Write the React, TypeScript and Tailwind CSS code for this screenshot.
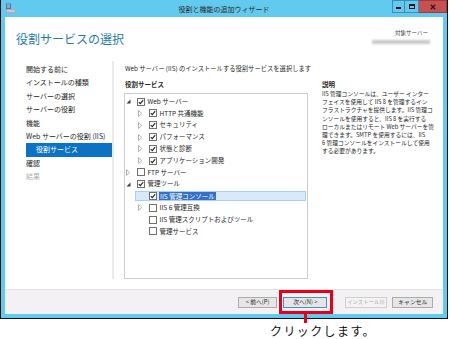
import React from "react";

type Row = {
  level: number;
  exp: "open" | "closed" | "none";
  checked: boolean;
  label: string;
  selected?: boolean;
};

const rows: Row[] = [
  { level: 0, exp: "open", checked: true, label: "Web サーバー" },
  { level: 1, exp: "closed", checked: true, label: "HTTP 共通機能" },
  { level: 1, exp: "closed", checked: true, label: "セキュリティ" },
  { level: 1, exp: "closed", checked: true, label: "パフォーマンス" },
  { level: 1, exp: "closed", checked: true, label: "状態と診断" },
  { level: 1, exp: "closed", checked: true, label: "アプリケーション開発" },
  { level: 0, exp: "closed", checked: false, label: "FTP サーバー" },
  { level: 0, exp: "open", checked: true, label: "管理ツール" },
  { level: 1, exp: "none", checked: true, label: "IIS 管理コンソール", selected: true },
  { level: 1, exp: "closed", checked: false, label: "IIS 6 管理互換" },
  { level: 1, exp: "none", checked: false, label: "IIS 管理スクリプトおよびツール" },
  { level: 1, exp: "none", checked: false, label: "管理サービス" },
];

const navItems = [
  "開始する前に",
  "インストールの種類",
  "サーバーの選択",
  "サーバーの役割",
  "機能",
  "Web サーバーの役割 (IIS)",
];

const descLines = [
  "IIS 管理コンソールは、ユーザー インター",
  "フェイスを使用して IIS 8 を管理するイン",
  "フラストラクチャを提供します。IIS 管理コ",
  "ンソールを使用すると、IIS 8 を実行する",
  "ローカルまたはリモート Web サーバーを管",
  "理できます。SMTP を使用するには、IIS",
  "6 管理コンソールをインストールして使用",
  "する必要があります。",
];

function AppIcon() {
  return (
    <svg width="11" height="11" viewBox="0 0 11 11">
      <rect x="1" y="0.5" width="5" height="7.5" fill="#4f76a3" />
      <rect x="2" y="1.5" width="3" height="1" fill="#c9d8ea" />
      <rect x="2" y="3.5" width="3" height="1" fill="#c9d8ea" />
      <rect x="1" y="6" width="9.5" height="4.5" rx="1" fill="#a3afba" />
      <rect x="2" y="7.5" width="7.5" height="1" fill="#e4e8ec" />
    </svg>
  );
}

function Triangle({ exp }: { exp: Row["exp"] }) {
  if (exp === "open")
    return (
      <svg width="5" height="5" viewBox="0 0 5 5">
        <polygon points="4.5,0.5 4.5,4.5 0.5,4.5" fill="#3c3c3c" />
      </svg>
    );
  if (exp === "closed")
    return (
      <svg width="5" height="7" viewBox="0 0 5 7">
        <polygon points="0.5,0.5 3.8,3.5 0.5,6.5" fill="none" stroke="#a9a9a9" strokeWidth="0.9" />
      </svg>
    );
  return null;
}

function Check({ checked }: { checked: boolean }) {
  return (
    <div className="w-[8px] h-[8px] shrink-0 border border-[#707070] bg-white flex items-center justify-center">
      {checked && (
        <svg width="6" height="6" viewBox="0 0 6 6">
          <path d="M0.8 3.1 L2.3 4.6 L5.2 1.2" fill="none" stroke="#1f1f1f" strokeWidth="1.1" />
        </svg>
      )}
    </div>
  );
}

function TreeRow({ row }: { row: Row }) {
  const inner = (
    <>
      <div className="w-[12px] h-full shrink-0 flex items-center pl-[1px]">
        <Triangle exp={row.exp} />
      </div>
      <Check checked={row.checked} />
      <span
        className={
          row.selected
            ? "ml-[2px] px-[1px] bg-[#3471c6] text-white leading-[8px] whitespace-nowrap"
            : "ml-[2.5px] whitespace-nowrap"
        }
      >
        {row.label}
      </span>
    </>
  );
  if (row.selected) {
    return (
      <div className="h-[11.8px] flex items-center pl-[10px] pr-[1px]">
        <div className="flex-1 h-[10px] flex items-center border border-[#a9d0f2] bg-[#d8eafa] pl-[1px]">
          {inner}
        </div>
      </div>
    );
  }
  return (
    <div
      className={
        row.level === 0
          ? "h-[11.8px] flex items-center"
          : "h-[11.8px] flex items-center pl-[12px]"
      }
    >
      {inner}
    </div>
  );
}

export default function App() {
  return (
    <div className="relative w-[450px] h-[339px] bg-white overflow-hidden font-['Noto_Sans_CJK_JP',sans-serif] text-[#262626]">
      <div className="w-[448px] h-[319px] flex flex-col bg-[#62c9ef] border-x border-b border-[#111111]">
        {/* title bar */}
        <div className="h-[17px] grid grid-cols-[1fr_auto_1fr] items-start">
          <div className="pl-[4px] pt-[3px]">
            <AppIcon />
          </div>
          <div className="text-[7px] leading-[19px] text-[#2a2a2a] whitespace-nowrap">
            役割と機能の追加ウィザード
          </div>
          <div className="flex justify-end">
            <div className="w-[13px] h-[13px] border border-[#3a8db5] flex items-end justify-center pb-[3px]">
              <div className="w-[5px] h-[2px] bg-[#111]" />
            </div>
            <div className="w-[14px] h-[13px] border-y border-r border-[#3a8db5] flex items-center justify-center">
              <div className="w-[6px] h-[5px] border border-t-2 border-[#111]" />
            </div>
            <div className="w-[28px] h-[13px] bg-[#c75050] border-y border-r border-[#9d3a3a] flex items-center justify-center">
              <svg width="6" height="6" viewBox="0 0 6 6">
                <path d="M0.8 0.8 L5.2 5.2 M5.2 0.8 L0.8 5.2" stroke="#2a1a1a" strokeWidth="1.3" />
              </svg>
            </div>
          </div>
        </div>

        {/* content */}
        <div className="mx-[4px] h-[297px] bg-white flex flex-col">
          <div className="h-[272px] flex flex-col">
            {/* header */}
            <div className="h-[44px] flex justify-between items-start pl-[11px] pr-[13px] pt-[13px]">
              <div className="mt-[2px] text-[12px] leading-[14px] text-[#1f7ab2] whitespace-nowrap">
                役割サービスの選択
              </div>
              <div className="flex flex-col items-end">
                <div className="text-[5.5px] leading-[7px] text-[#444] mr-[2px] whitespace-nowrap">
                  対象サーバー
                </div>
                <div className="mt-[2.5px] w-[58px] h-[4px] bg-[#c9c9c9] blur-[1px]" />
              </div>
            </div>

            {/* body */}
            <div className="h-[218px] flex">
              {/* nav */}
              <div className="w-[109px] shrink-0 border-r-2 border-[#ebebeb] pt-[2px] flex flex-col text-[7px]">
                {navItems.map((t) => (
                  <div key={t} className="h-[13.4px] leading-[13.4px] pl-[21px] whitespace-nowrap">
                    {t}
                  </div>
                ))}
                <div className="h-[13.4px] leading-[13.4px] ml-[21px] pl-[10px] bg-[#0b72c4] text-white whitespace-nowrap">
                  役割サービス
                </div>
                <div className="h-[13.4px] leading-[13.4px] pl-[21px]">確認</div>
                <div className="h-[13.4px] leading-[13.4px] pl-[21px] text-[#b0b0b0]">結果</div>
              </div>

              {/* main */}
              <div className="flex-1 pl-[11px] flex flex-col">
                <div className="pt-[2.5px] text-[6.3px] leading-[9px] whitespace-nowrap">
                  Web サーバー (IIS) のインストールする役割サービスを選択します
                </div>
                <div className="mt-[7px] flex">
                  <div className="w-[184px] -ml-[1px] flex flex-col">
                    <div className="pl-[1px] text-[6.5px] leading-[9px] font-bold">役割サービス</div>
                    <div className="mt-[4.5px] h-[186px] border border-[#cdcdcd] pt-[1.8px] text-[6.5px]">
                      {rows.map((r) => (
                        <TreeRow key={r.label} row={r} />
                      ))}
                    </div>
                  </div>
                  <div className="ml-[14px] flex flex-col">
                    <div className="text-[6.5px] leading-[9px] font-bold">説明</div>
                    <div className="mt-[1.8px] text-[5.75px] leading-[8.1px] whitespace-nowrap">
                      {descLines.map((l) => (
                        <div key={l}>{l}</div>
                      ))}
                    </div>
                  </div>
                </div>
              </div>
            </div>
          </div>

          {/* footer */}
          <div className="h-[25px] border-t border-[#e2e2e2] bg-[#f3f1f4] flex items-center justify-end pr-[9.7px] text-[5.8px]">
            <div className="w-[38.4px] h-[11px] border border-[#acacac] bg-[#e6e6e6] flex items-center justify-center whitespace-nowrap">
              &lt; 前へ(P)
            </div>
            <div className="ml-[6.6px] w-[44px] h-[11px] border border-[#4a8fc6] bg-[#e6e6e6] flex items-center justify-center whitespace-nowrap">
              次へ(N) &gt;
            </div>
            <div className="ml-[17.7px] w-[41.7px] h-[11px] border border-[#cfcfcf] bg-[#f4f4f4] text-[#a8a8a8] text-[5.4px] flex items-center justify-center whitespace-nowrap">
              インストール(I)
            </div>
            <div className="ml-[5.6px] w-[41px] h-[11px] border border-[#acacac] bg-[#e6e6e6] flex items-center justify-center whitespace-nowrap">
              キャンセル
            </div>
          </div>
        </div>
      </div>

      {/* annotation */}
      <div className="absolute left-[279px] top-[290px] w-[54px] h-[24px] border-[3px] border-[#e8001a]" />
      <div className="absolute left-[304px] top-[314px] w-[3px] h-[9px] bg-[#e8001a]" />
      <div className="absolute left-[270px] top-[324px] text-[12px] leading-[14px] tracking-[1.4px] text-[#111] whitespace-nowrap">
        クリックします。
      </div>
    </div>
  );
}
